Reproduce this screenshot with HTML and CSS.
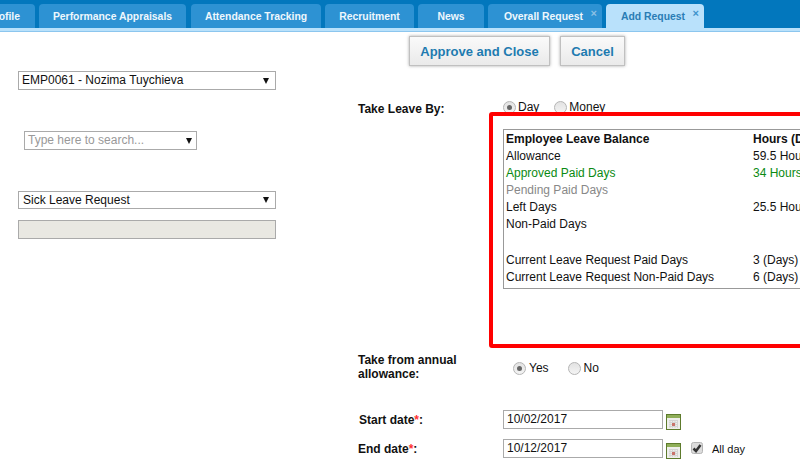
FILE: index.html
```html
<!DOCTYPE html>
<html lang="en">
<head>
<meta charset="utf-8">
<title>Add Request</title>
<link rel="stylesheet" href="styles.css">
</head>
<body>
<div class="page">
  <nav class="tabs">
    <a class="tab tab-first">Employee Profile</a>
    <a class="tab tab-perf">Performance Appraisals</a>
    <a class="tab tab-att">Attendance Tracking</a>
    <a class="tab tab-rec">Recruitment</a>
    <a class="tab tab-news">News</a>
    <a class="tab tab-over">Overall Request<span class="close">×</span></a>
    <a class="tab tab-add active">Add Request<span class="close">×</span></a>
  </nav>
  <div class="toolbar">
    <button class="btn btn-approve">Approve and Close</button>
    <button class="btn btn-cancel">Cancel</button>
  </div>
  <main class="content">
    <section class="left">
      <div class="field field-emp"><span>EMP0061 - Nozima Tuychieva</span><i class="caret"></i></div>
      <div class="field field-search"><span class="placeholder">Type here to search...</span><i class="caret"></i></div>
      <div class="field field-type"><span>Sick Leave Request</span><i class="caret"></i></div>
      <div class="field field-disabled"></div>
    </section>
    <section class="right">
      <div class="row row-by">
        <label class="label label-by">Take Leave By:</label>
        <div class="radios radios-by">
          <span class="radio on"></span><span class="radio-text">Day</span>
          <span class="radio"></span><span class="radio-text">Money</span>
        </div>
      </div>
      <div class="balance">
        <div class="bal-row bold"><span class="bal-name">Employee Leave Balance</span><span>Hours (Days)</span></div>
        <div class="bal-row"><span class="bal-name">Allowance</span><span>59.5 Hours</span></div>
        <div class="bal-row green"><span class="bal-name">Approved Paid Days</span><span>34 Hours</span></div>
        <div class="bal-row grey"><span class="bal-name">Pending Paid Days</span></div>
        <div class="bal-row"><span class="bal-name">Left Days</span><span>25.5 Hours</span></div>
        <div class="bal-row"><span class="bal-name">Non-Paid Days</span></div>
        <div class="bal-row bal-gap"></div>
        <div class="bal-row"><span class="bal-name">Current Leave Request Paid Days</span><span>3 (Days)</span></div>
        <div class="bal-row"><span class="bal-name">Current Leave Request Non-Paid Days</span><span>6 (Days)</span></div>
      </div>
      <div class="row row-annual">
        <label class="label label-annual">Take from annual allowance:</label>
        <div class="radios radios-annual">
          <span class="radio on"></span><span class="radio-text">Yes</span>
          <span class="radio"></span><span class="radio-text">No</span>
        </div>
      </div>
      <div class="row row-start">
        <label class="label label-date">Start date<em>*</em>:</label>
        <div class="date-input">10/02/2017</div>
        <svg class="cal" viewBox="0 0 15 16" width="15" height="16"><rect x=".5" y=".5" width="14" height="15" fill="#eeeeea" stroke="#5d7a2c"/><rect x="1" y="1" width="13" height="3" fill="#8fae58"/><path d="M3 6.500h9M3 8.500h9M3 10.500h9M3 12.500h9M4 6v8M6.500 6v8M9 6v8M11.500 6v8" stroke="#d4d4d4" fill="none"/><rect x="6" y="9" width="3" height="3" fill="#c9736b"/></svg>
      </div>
      <div class="row row-end">
        <label class="label label-date label-end">End date<em>*</em>:</label>
        <div class="date-input">10/12/2017</div>
        <svg class="cal" viewBox="0 0 15 16" width="15" height="16"><rect x=".5" y=".5" width="14" height="15" fill="#eeeeea" stroke="#5d7a2c"/><rect x="1" y="1" width="13" height="3" fill="#8fae58"/><path d="M3 6.500h9M3 8.500h9M3 10.500h9M3 12.500h9M4 6v8M6.500 6v8M9 6v8M11.500 6v8" stroke="#d4d4d4" fill="none"/><rect x="6" y="9" width="3" height="3" fill="#c9736b"/></svg>
        <svg class="check" viewBox="0 0 12 12" width="12" height="12"><rect x=".5" y=".5" width="11" height="11" rx="2" fill="#dcdcdc" stroke="#b4b4b4"/><path d="M2.500 6.500 5 9l4.500-6" fill="none" stroke="#333" stroke-width="2.500"/></svg>
        <span class="allday">All day</span>
      </div>
    </section>
  </main>
  <div class="annotation"></div>
</div>
</body>
</html>
```
FILE: styles.css
```css
* { box-sizing: border-box; }
html, body { margin: 0; padding: 0; }
body { font-family: "Liberation Sans", Arial, sans-serif; font-size: 12px; color: #111; background: #fff; }
.page { position: relative; width: 800px; height: 468px; overflow: hidden; }

.tabs { display: flex; align-items: flex-end; gap: 4px; height: 31px; background: #0277bd; border-bottom: 3px solid #b9e1fb; box-shadow: 0 1px 0 #8cc6ee; }
.tab { position: relative; display: flex; align-items: center; justify-content: center; height: 24px; background: #2d92d3; color: #eef7fd; font-weight: bold; font-size: 10.400px; border-radius: 4px 4px 0 0; white-space: nowrap; }
.tab-first { width: 35px; justify-content: flex-end; padding-right: 15px; border-top-left-radius: 0; overflow: hidden; }
.tab-perf { width: 147px; }
.tab-att { width: 130px; margin-left: 1px; }
.tab-rec { width: 89px; }
.tab-news { width: 66px; }
.tab-over { width: 114px; padding-right: 3px; }
.tab-add { width: 98px; padding-right: 4px; }
.active { background: #b9e1fb; color: #2a7db5; }
.close { position: absolute; top: 3px; right: 5px; font-size: 11px; line-height: 12px; color: #8cc0e4; }
.active .close { color: #3f93cc; }

.toolbar { display: flex; gap: 10px; padding: 5px 0 0 409px; }
.btn { height: 30px; padding: 0; border: 1px solid #c0c0c0; background: linear-gradient(#fafafa, #eaeaea); box-shadow: 0 0 3px #aaa; color: #1e7bb0; font: bold 13px "Liberation Sans", Arial, sans-serif; }
.btn-approve { width: 141px; }
.btn-cancel { width: 65px; }

.content { display: flex; }
.left { width: 358px; flex: none; padding: 5px 0 0 18px; }
.field { display: flex; align-items: center; justify-content: space-between; height: 19px; width: 258px; padding: 0 6px 2px 3px; border: 1px solid #aaa; background: #fff; }
.field-search { width: 173px; margin: 41px 0 0 6px; padding-right: 4px; }
.field-type { margin-top: 41px; height: 18px; padding: 0 6px 0 4px; }
.field-disabled { margin-top: 11px; background: #e9e8e2; }
.placeholder { color: #999; }
.caret { width: 0; height: 0; margin-top: 2px; border-left: 3.500px solid transparent; border-right: 3.500px solid transparent; border-top: 6px solid #111; }
.field-type .caret { margin-top: 0; }

.right { flex: 1; min-width: 0; }
.row { display: flex; align-items: center; }
.label { display: block; width: 145px; flex: none; font-weight: bold; }
.row-by { height: 20px; margin-top: 32px; }
.label-by { padding-top: 2px; }
.radios { display: flex; align-items: center; }
.radios-by { margin-bottom: 2px; }
.radio { width: 13px; height: 13px; border-radius: 50%; border: 1px solid #b5b5b5; background: linear-gradient(#e2e2e2, #f4f4f4); position: relative; }
.radio.on::after { content: ""; position: absolute; left: 3px; top: 3px; width: 5px; height: 5px; border-radius: 50%; background: #666; }
.radio-text { margin: 0 15px 0 2px; }
.radios-annual { padding: 2px 0 0 10px; }
.radios-annual .radio-text { margin: 0 19px 0 3px; }

.balance { margin: 11px 0 0 145px; width: 420px; height: 160px; padding: 1px 0 0 2px; border: 1px solid #999; }
.bal-row { display: flex; height: 17px; line-height: 17px; white-space: nowrap; }
.bal-gap { height: 19px; }
.bal-name { width: 247px; flex: none; }
.bold { font-weight: bold; }
.green { color: #0a8a12; }
.grey { color: #888; }

.row-annual { margin-top: 62px; height: 32px; }
.label-annual { width: 120px; margin-right: 25px; line-height: 14px; }
.row-start { margin-top: 27px; height: 19px; }
.row-end { margin-top: 10px; height: 19px; }
.label-date { padding-left: 1px; }
.label-end { padding-left: 0; }
.label em { font-style: normal; color: #f33; }
.date-input { width: 160px; height: 19px; line-height: 17px; padding-left: 3px; border: 1px solid #aaa; }
.cal { flex: none; margin: 4px 0 0 3px; align-self: flex-start; }
.check { flex: none; margin: 0 0 2px 10px; }
.allday { margin-left: 9px; font-size: 11px; }

.annotation { position: absolute; left: 489px; top: 112px; width: 340px; height: 236px; border: 4px solid #f00; border-radius: 3px; }
```
